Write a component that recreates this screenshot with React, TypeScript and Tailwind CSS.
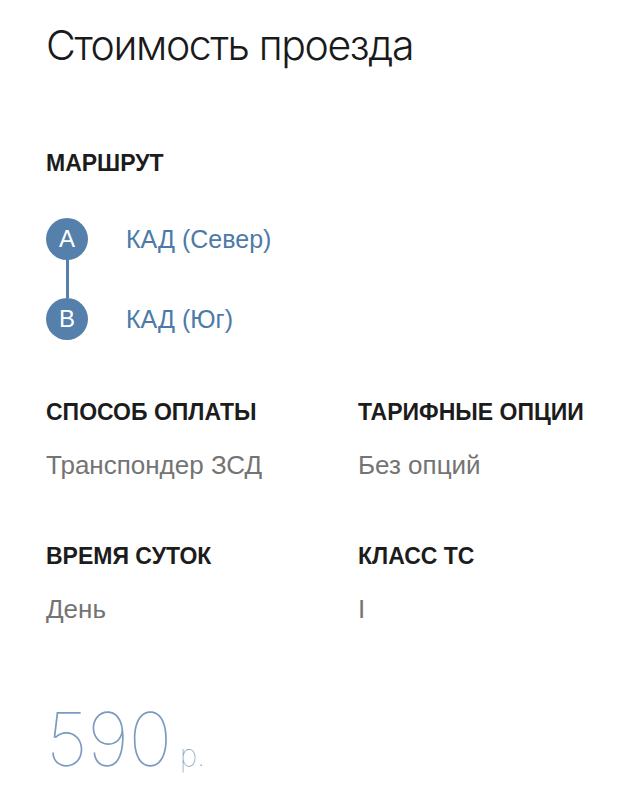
import React from 'react';

const sans = { fontFamily: '"Liberation Sans", Arial, sans-serif' };
const thin = { fontFamily: '"Inter", "Liberation Sans", sans-serif' };

type Field = { label: string; value: string };

const fields: Field[][] = [
  [
    { label: 'Способ оплаты', value: 'Транспондер ЗСД' },
    { label: 'Тарифные опции', value: 'Без опций' },
  ],
  [
    { label: 'Время суток', value: 'День' },
    { label: 'Класс ТС', value: 'I' },
  ],
];

const Label: React.FC<{ children: React.ReactNode }> = ({ children }) => (
  <div className="text-[23px] font-bold uppercase leading-none text-[#1c1c1c]">{children}</div>
);

const Stop: React.FC<{ letter: string; name: string }> = ({ letter, name }) => (
  <div className="flex items-center gap-[38px]">
    <div className="flex h-[42px] w-[42px] items-center justify-center rounded-full bg-[#5580ab] text-[24px] leading-none text-white">
      {letter}
    </div>
    <span className="text-[25px] leading-none text-[#4d7aa8]">{name}</span>
  </div>
);

const App: React.FC = () => {
  return (
    <div className="min-h-screen bg-white px-[46px] pt-[21px]" style={sans}>
      <h1
        className="text-[41px] font-light leading-[48px] tracking-[-1.4px] text-[#1a1a1a]"
        style={thin}
      >
        Стоимость проезда
      </h1>

      <section className="mt-[83px]">
        <Label>Маршрут</Label>
        <div className="mt-[43px] flex flex-col">
          <Stop letter="A" name="КАД (Север)" />
          <div className="ml-[19.5px] h-[38px] w-[3px] bg-[#5580ab]" />
          <Stop letter="B" name="КАД (Юг)" />
        </div>
      </section>

      <section className="mt-[61px] flex flex-col gap-[67px]">
        {fields.map((row, i) => (
          <div key={i} className="grid grid-cols-[312px_1fr]">
            {row.map((f) => (
              <div key={f.label}>
                <Label>{f.label}</Label>
                <div className="mt-[28px] text-[26px] leading-none text-[#747474]">{f.value}</div>
              </div>
            ))}
          </div>
        ))}
      </section>

      <div className="mt-[80px] flex items-baseline gap-[8px] text-[#7b9cc0]" style={thin}>
        <span className="text-[74px] font-thin leading-none tracking-[-0.5px]">590</span>
        <span className="text-[30px] font-thin">р.</span>
      </div>
    </div>
  );
};

export default App;
